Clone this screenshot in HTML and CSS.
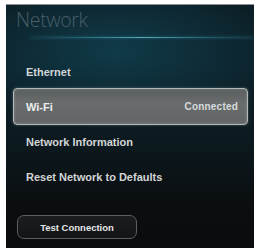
FILE: index.html
```html
<!DOCTYPE html>
<html>
<head>
<meta charset="utf-8">
<link rel="stylesheet" href="styles.css">
</head>
<body>
<div class="screen">
  <div class="header">
    <div class="title">Network</div>
    <div class="glow"></div>
  </div>
  <ul class="menu">
    <li class="item">Ethernet</li>
    <li class="item selected"><span>Wi-Fi</span><span class="status">Connected</span></li>
    <li class="item">Network Information</li>
    <li class="item">Reset Network to Defaults</li>
  </ul>
  <div class="footer">
    <button class="btn">Test Connection</button>
  </div>
</div>
</body>
</html>
```
FILE: styles.css
```css
html, body {
  margin: 0;
  padding: 0;
  background: #fff;
}
.screen {
  margin: 4px 0 0 6px;
  width: 248px;
  height: 244px;
  box-sizing: border-box;
  border-top: 1px solid #8a9094;
  background:
    radial-gradient(ellipse 170px 80px at 110px 45px, rgba(20, 85, 105, 0.5), rgba(20, 85, 105, 0) 100%),
    linear-gradient(180deg, #0c1d24 0%, #0c2029 25%, #0c1a1f 55%, #0b0f11 80%, #0a0c0d 100%);
  font-family: "Liberation Sans", Arial, sans-serif;
  display: flex;
  flex-direction: column;
  overflow: hidden;
}
.header {
  height: 44px;
  padding-left: 10px;
  display: flex;
  flex-direction: column;
}
.title {
  font-family: "Open Sans", sans-serif;
  font-weight: 300;
  font-size: 19.5px;
  line-height: 22px;
  margin-top: 4px;
  color: #485f69;
  letter-spacing: -0.3px;
}
.glow {
  margin-top: 6px;
  margin-left: 14px;
  height: 1px;
  background: linear-gradient(90deg, rgba(60,150,170,0) 0%, rgba(70,160,180,0.6) 30%, rgba(100,190,205,0.85) 50%, rgba(70,160,180,0.5) 75%, rgba(60,150,170,0.1) 100%);
  box-shadow: 0 0 3px rgba(60,160,190,0.6);
}
.menu {
  list-style: none;
  margin: 5px 6px 0 0;
  padding: 0 0 0 7px;
}
.item {
  height: 35px;
  display: flex;
  align-items: center;
  justify-content: space-between;
  padding: 0 10px 0 13px;
  font-size: 11px;
  font-weight: bold;
  color: #d3d6d7;
  box-sizing: border-box;
}
.selected {
  height: 37px;
  margin: -1px 0;
  border: 1px solid #b3b8ba;
  border-radius: 4px;
  background: linear-gradient(180deg, #5a5e5f 0%, #686c6d 40%, #626667 100%);
  box-shadow: 0 0 3px rgba(200,210,215,0.35), inset 0 0 3px rgba(255,255,255,0.25);
  padding: 0 9px 0 12px;
  color: #eceeee;
}
.status {
  font-size: 10px;
  font-weight: bold;
  color: #d8dbdc;
  letter-spacing: 0.2px;
}
.footer {
  margin-top: auto;
  padding: 0 0 9px 11px;
}
.btn {
  width: 120px;
  height: 24px;
  border: 1px solid #5b5f61;
  border-radius: 7px;
  background: linear-gradient(180deg, #1b1d1e 0%, #121415 100%);
  color: #e4e6e7;
  font-family: "Liberation Sans", Arial, sans-serif;
  font-weight: bold;
  font-size: 9.5px;
  padding: 0;
  display: block;
}
```
